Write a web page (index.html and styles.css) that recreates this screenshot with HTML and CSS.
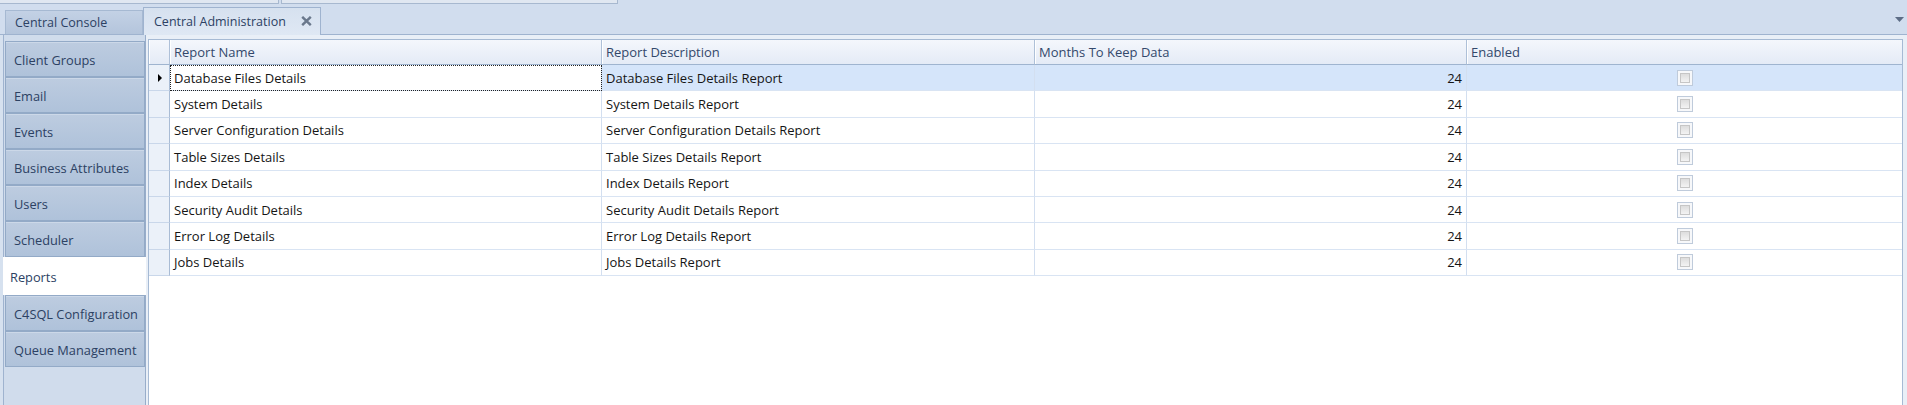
FILE: index.html
```html
<!DOCTYPE html>
<html>
<head>
<meta charset="utf-8">
<title>Central Administration</title>
<link rel="stylesheet" href="styles.css">
</head>
<body>
<div class="app">
  <div class="topstrip"><div class="tb tb1"></div><div class="tb tb2"></div></div>
  <div class="tabrow">
    <div class="tab tab-console">Central Console</div>
    <div class="tab tab-active">
      <span>Central Administration</span>
      <svg class="close" width="11" height="10" viewBox="0 0 11 10"><path d="M1.2 0.8 L9.8 9.2 M9.8 0.8 L1.2 9.2" stroke="#6a788c" stroke-width="2.4" stroke-linecap="butt"/></svg>
    </div>
    <svg class="dd" width="9" height="5" viewBox="0 0 9 5"><path d="M0 0 H9 L4.5 5 Z" fill="#5d6d86"/></svg>
  </div>
  <div class="main">
    <nav class="nav">
      <div class="navin">
        <div class="navbtn">Client Groups</div>
        <div class="navbtn">Email</div>
        <div class="navbtn">Events</div>
        <div class="navbtn">Business Attributes</div>
        <div class="navbtn">Users</div>
        <div class="navbtn">Scheduler</div>
        <div class="navbtn sel">Reports</div>
        <div class="navbtn">C4SQL Configuration</div>
        <div class="navbtn">Queue Management</div>
      </div>
    </nav>
    <section class="page">
      <div class="grid">
        <div class="hdr">
          <div class="hc"></div>
          <div class="hc">Report Name</div>
          <div class="hc">Report Description</div>
          <div class="hc">Months To Keep Data</div>
          <div class="hc last">Enabled</div>
        </div>
        <div class="row sel">
          <div class="c ind"><span class="arrow"></span></div>
          <div class="c focus">Database Files Details</div>
          <div class="c">Database Files Details Report</div>
          <div class="c num">24</div>
          <div class="c chk"><span class="cb"><span class="cbi"></span></span></div>
        </div>
        <div class="row">
          <div class="c ind"></div>
          <div class="c">System Details</div>
          <div class="c">System Details Report</div>
          <div class="c num">24</div>
          <div class="c chk"><span class="cb"><span class="cbi"></span></span></div>
        </div>
        <div class="row">
          <div class="c ind"></div>
          <div class="c">Server Configuration Details</div>
          <div class="c">Server Configuration Details Report</div>
          <div class="c num">24</div>
          <div class="c chk"><span class="cb"><span class="cbi"></span></span></div>
        </div>
        <div class="row">
          <div class="c ind"></div>
          <div class="c">Table Sizes Details</div>
          <div class="c">Table Sizes Details Report</div>
          <div class="c num">24</div>
          <div class="c chk"><span class="cb"><span class="cbi"></span></span></div>
        </div>
        <div class="row">
          <div class="c ind"></div>
          <div class="c">Index Details</div>
          <div class="c">Index Details Report</div>
          <div class="c num">24</div>
          <div class="c chk"><span class="cb"><span class="cbi"></span></span></div>
        </div>
        <div class="row">
          <div class="c ind"></div>
          <div class="c">Security Audit Details</div>
          <div class="c">Security Audit Details Report</div>
          <div class="c num">24</div>
          <div class="c chk"><span class="cb"><span class="cbi"></span></span></div>
        </div>
        <div class="row">
          <div class="c ind"></div>
          <div class="c">Error Log Details</div>
          <div class="c">Error Log Details Report</div>
          <div class="c num">24</div>
          <div class="c chk"><span class="cb"><span class="cbi"></span></span></div>
        </div>
        <div class="row">
          <div class="c ind"></div>
          <div class="c">Jobs Details</div>
          <div class="c">Jobs Details Report</div>
          <div class="c num">24</div>
          <div class="c chk"><span class="cb"><span class="cbi"></span></span></div>
        </div>
      </div>
    </section>
  </div>
</div>
</body>
</html>
```

FILE: styles.css
```css
* { box-sizing: border-box; }
html, body { margin: 0; padding: 0; }
body {
  width: 1907px;
  height: 405px;
  overflow: hidden;
  background: #d1ddee;
  font-family: "Open Sans", "Noto Sans", sans-serif;
  font-size: 12.5px;
  color: #2c4163;
}
.app { display: flex; flex-direction: column; height: 405px; }

/* cut-off toolbar strip at the very top */
.topstrip { display: flex; height: 4px; flex: none; }
.tb { height: 4px; background: #e0e7f1; border-bottom: 1px solid #a7b8cf; border-right: 1px solid #a7b8cf; }
.tb1 { width: 279px; }
.tb2 { width: 337px; margin-left: 2px; border-left: 1px solid #a7b8cf; }

/* tab header row */
.tabrow {
  display: flex;
  align-items: flex-end;
  height: 31px;
  flex: none;
  border-bottom: 1px solid #9fb3cf;
}
.tab {
  display: flex;
  align-items: center;
  white-space: nowrap;
  color: #2c4163;
}
.tab-console {
  margin-left: 5px;
  width: 138px;
  height: 24px;
  padding-left: 9px;
  border: 1px solid #a6b9d2;
  border-bottom: none;
  background: linear-gradient(#c3d1e5, #b4c5dc);
}
.tab-active {
  width: 178px;
  height: 28px;
  margin-bottom: -1px;
  padding: 0 8px 0 10px;
  border: 1px solid #9fb3cf;
  border-bottom: none;
  background: linear-gradient(#d6e1ef, #dfe8f4);
  justify-content: space-between;
}
.tab-active span { padding-bottom: 1px; }
.close { flex: none; margin-top: -1px; }
.dd { align-self: flex-start; margin: 13px 3px 0 auto; flex: none; }

/* body */
.main { display: flex; flex: 1; min-height: 0; }
.nav {
  width: 146px;
  flex: none;
  padding-left: 3px;
  background: #d6e1ef;
}
.navin {
  height: 100%;
  border-left: 1px solid #9fb3cf;
  border-right: 1px solid #98adca;
  background: #d0dcec;
  padding: 6px 0 0 1px;
}
.navbtn {
  width: 140px;
  height: 36px;
  display: flex;
  align-items: center;
  padding: 1px 0 0 8px;
  border: 1px solid #93aac7;
  background: linear-gradient(#bdcce0, #afc2da);
  box-shadow: inset 0 1px 0 #ccd8e8;
  color: #2c4163;
  font-size: 12.8px;
  white-space: nowrap;
}
.navbtn.sel {
  margin-left: -2px;
  width: 143px;
  height: 38px;
  padding-left: 7px;
  border: none;
  box-shadow: none;
  background: #ffffff;
}

/* tab page with the grid */
.page {
  flex: 1;
  min-width: 0;
  background: #e9eff7;
  padding: 4px 4px 0 2px;
}
.grid {
  height: 100%;
  border: 1px solid #a6bad4;
  border-bottom: none;
  background: #ffffff;
  font-size: 13px;
}
.hdr, .row {
  display: grid;
  grid-template-columns: 21px 432px 433px 432px 1fr;
}
.hdr { height: 25px; }
.hc {
  display: flex;
  align-items: center;
  padding-left: 4px;
  border-right: 1px solid #aec0d8;
  border-bottom: 1px solid #9fb4cf;
  background: linear-gradient(#f4f7fc, #e4ebf6);
  box-shadow: inset 1px 0 0 #ffffff;
  color: #33486b;
  white-space: nowrap;
}
.hc.last { border-right: none; }

.row { height: 26.4px; }
.c {
  display: flex;
  align-items: center;
  padding: 0 4px;
  border-right: 1px solid #d3dff0;
  border-bottom: 1px solid #d9e4f3;
  color: #151515;
  white-space: nowrap;
  overflow: hidden;
}
.c:last-child { border-right: none; }
.c.ind {
  background: #ebf1f9;
  border-right: 1px solid #a9bcd5;
  border-bottom: 1px solid #c9d7ea;
  justify-content: center;
  padding: 0;
}
.row.sel .c { background: #d5e5fa; }
.row.sel .c.ind { background: #ebf1f9; }
.row.sel .c.focus {
  background: #ffffff;
  outline: 1px dotted #222222;
  outline-offset: -1px;
}
.arrow {
  width: 0;
  height: 0;
  margin-left: 1px;
  border-left: 4px solid #000000;
  border-top: 4px solid transparent;
  border-bottom: 4px solid transparent;
}
.num { justify-content: flex-end; }
.chk { justify-content: center; padding: 0; }
.cb {
  width: 16px;
  height: 16px;
  padding: 2px;
  border: 1px solid #bfcbdb;
  background: #f7f8fa;
}
.cbi {
  display: block;
  width: 100%;
  height: 100%;
  border: 1px solid #c6c6c6;
  background: linear-gradient(#dddddd, #f3f3f3);
}
```
